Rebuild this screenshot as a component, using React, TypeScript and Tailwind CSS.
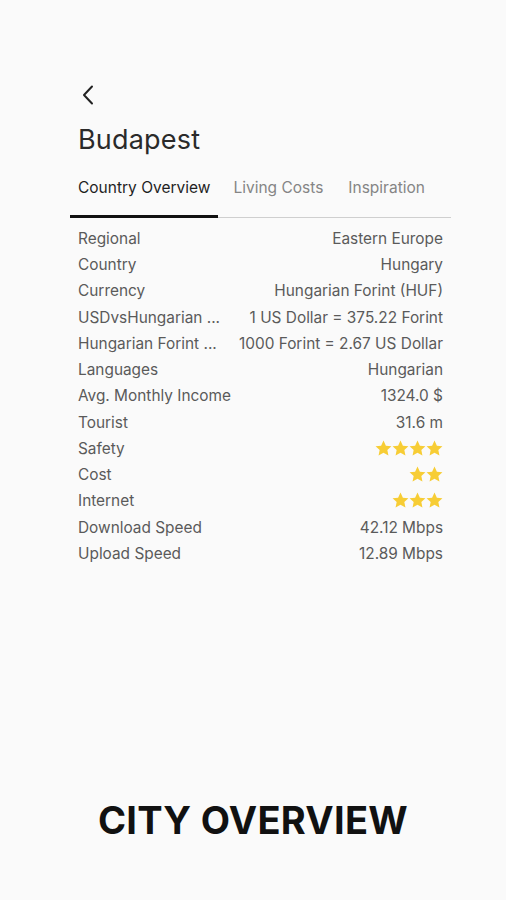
import React from "react";

const Star = () => (
  <svg width="17" height="17" viewBox="1.5 1.5 21 21" className="shrink-0">
    <path
      d="M12 2.2l2.95 6.3 6.85.8-5.07 4.7 1.36 6.8L12 17.4l-6.09 3.4 1.36-6.8L2.2 9.3l6.85-.8z"
      fill="#F7CD35"
    />
  </svg>
);

const Stars = ({ n }: { n: number }) => (
  <div className="flex items-center gap-0">
    {Array.from({ length: n }).map((_, i) => (
      <Star key={i} />
    ))}
  </div>
);

const rows: [string, React.ReactNode][] = [
  ["Regional", "Eastern Europe"],
  ["Country", "Hungary"],
  ["Currency", "Hungarian Forint (HUF)"],
  ["USDvsHungarian ...", "1 US Dollar = 375.22 Forint"],
  ["Hungarian Forint ...", "1000 Forint = 2.67 US Dollar"],
  ["Languages", "Hungarian"],
  ["Avg. Monthly Income", "1324.0 $"],
  ["Tourist", "31.6 m"],
  ["Safety", <Stars n={4} />],
  ["Cost", <Stars n={2} />],
  ["Internet", <Stars n={3} />],
  ["Download Speed", "42.12 Mbps"],
  ["Upload Speed", "12.89 Mbps"],
];

export default function App() {
  return (
    <div
      className="w-[506px] h-[900px] bg-[#fafafa] flex flex-col"
      style={{ fontFamily: "Inter, 'Noto Sans', sans-serif" }}
    >
      <div className="pl-[70px] pr-[55px] pt-[84px]">
        <div className="pl-[11px]">
          <svg width="14" height="22" viewBox="0 0 14 22" fill="none">
            <path d="M11 2.5L3 11l8 8.5" stroke="#222" strokeWidth="2" strokeLinecap="round" strokeLinejoin="round" />
          </svg>
        </div>
        <div className="pl-[8px] mt-[17px] text-[27px] leading-[34px] text-[#2a2a2a] tracking-[0.2px]">Budapest</div>
        <div className="mt-[15px] flex border-b border-[#cfcfcf] text-[15.5px]">
          <div className="px-[8px] pt-[4px] pb-[16px] text-[#1f1f1f] border-b-[3px] border-[#111] -mb-[1px]">Country Overview</div>
          <div className="ml-[7px] px-[8px] pt-[4px] pb-[16px] text-[#858585]">Living Costs</div>
          <div className="ml-[9px] px-[8px] pt-[4px] pb-[16px] text-[#858585]">Inspiration</div>
        </div>
        <div className="px-[8px] pt-[7px] flex flex-col text-[15.4px] text-[#5a5a5a]">
          {rows.map(([k, v], i) => (
            <div key={i} className="flex items-center justify-between h-[26.25px]">
              <span>{k}</span>
              <span>{v}</span>
            </div>
          ))}
        </div>
      </div>
      <div className="mt-auto mb-[51px] text-center text-[38px] font-bold text-[#111] tracking-[0.3px]">CITY OVERVIEW</div>
    </div>
  );
}
